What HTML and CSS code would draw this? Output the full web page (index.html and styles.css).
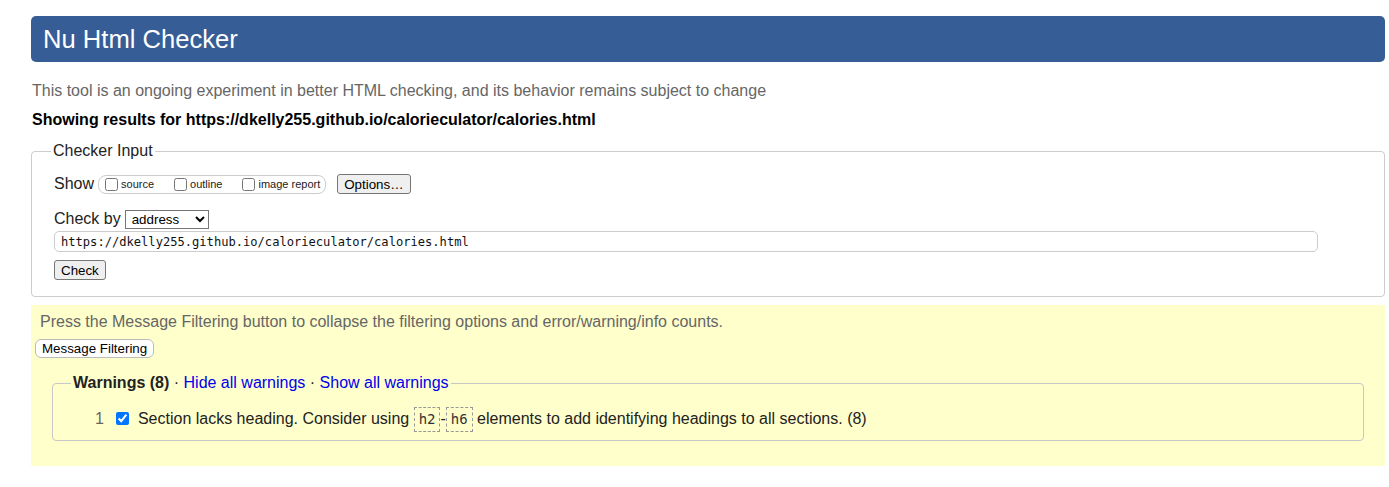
FILE: index.html
```html
<!DOCTYPE html>
<html lang="en">
<head>
<meta charset="utf-8">
<title>Nu Html Checker</title>
<link rel="stylesheet" href="styles.css">
</head>
<body>
<div class="page">
  <h1 class="title">Nu Html Checker</h1>
  <p class="about">This tool is an ongoing experiment in better HTML checking, and its behavior remains subject to change</p>
  <p class="results">Showing results for https://dkelly255.github.io/calorieculator/calories.html</p>
  <form class="input-form">
    <fieldset class="checker">
      <legend class="checker-legend">Checker Input</legend>
      <div class="show-row">
        <span class="row-label">Show</span>
        <span class="show-group">
          <label class="opt"><input class="opt-box" type="checkbox">source</label>
          <label class="opt"><input class="opt-box" type="checkbox">outline</label>
          <label class="opt opt-last"><input class="opt-box" type="checkbox">image report</label>
        </span>
        <button type="button" class="btn btn-options">Options…</button>
      </div>
      <div class="by-row">
        <span class="row-label">Check by</span>
        <select class="select"><option>address</option></select>
      </div>
      <input class="url" type="text" value="https://dkelly255.github.io/calorieculator/calories.html">
      <div class="check-row"><button type="button" class="btn">Check</button></div>
    </fieldset>
  </form>
  <div class="filters">
    <p class="filter-info">Press the Message Filtering button to collapse the filtering options and error/warning/info counts.</p>
    <button type="button" class="filter-btn">Message Filtering</button>
    <fieldset class="warnings">
      <legend class="warnings-legend"><strong>Warnings (8)</strong> · <a class="link" href="#">Hide all warnings</a> · <a class="link" href="#">Show all warnings</a></legend>
      <div class="warn-row">
        <span class="num">1</span>
        <input class="warn-box" type="checkbox" checked>
        <span class="msg">Section lacks heading. Consider using <code class="code">h2</code>-<code class="code">h6</code> elements to add identifying headings to all sections. (8)</span>
      </div>
    </fieldset>
  </div>
</div>
</body>
</html>
```

FILE: styles.css
```css
html, body {
  margin: 0;
  padding: 0;
  background: #fff;
}

body {
  font-family: "Liberation Sans", Arial, sans-serif;
  font-size: 16px;
  color: #111;
}

.page {
  margin-left: 31px;
  width: 1354px;
  padding-top: 16px;
}

.title {
  margin: 0;
  height: 46px;
  line-height: 46px;
  padding-left: 12px;
  background: #365d95;
  color: #fff;
  font-size: 25.6px;
  font-weight: normal;
  border-radius: 5px;
}

.about {
  margin: 20px 0 0 1px;
  line-height: 18px;
  color: #666;
}

.results {
  margin: 11px 0 0 1px;
  line-height: 18px;
  font-weight: bold;
  color: #000;
}

.input-form {
  margin: 13px 0 0 0;
}

.checker {
  margin: 0;
  padding: 14px 22px 16px 22px;
  border: 1px solid #ccc;
  border-radius: 4px;
}

.checker-legend {
  margin-left: -3px;
  padding: 0 2px;
  line-height: 18px;
  color: #222;
}

.show-row, .by-row {
  display: flex;
  align-items: center;
  height: 20px;
}

.row-label {
  line-height: 18px;
  color: #222;
}

.show-group {
  display: flex;
  align-items: center;
  height: 17px;
  margin-left: 4px;
  padding: 0 5px 0 2px;
  border: 1px solid #ccc;
  border-radius: 8px;
}

.opt {
  display: flex;
  align-items: center;
  font-size: 11px;
  color: #222;
  margin-right: 16px;
}

.opt-last {
  margin-right: 0;
}

.opt-box {
  width: 13px;
  height: 13px;
  margin: 0 3px 0 4px;
}

.btn {
  font-family: "Liberation Sans", Arial, sans-serif;
  font-size: 13.33px;
  color: #000;
  background: #efefef;
  border: 1px solid #767676;
  border-radius: 3px;
  padding: 1px 6px;
  height: 20px;
  line-height: 15px;
}

.btn-options {
  margin-left: 11px;
}

.by-row {
  margin-top: 15px;
}

.select {
  margin-left: 4px;
  width: 84px;
  height: 19px;
  font-family: "Liberation Sans", Arial, sans-serif;
  font-size: 13.33px;
  border: 1px solid #767676;
  border-radius: 0;
  background: #fff;
  padding: 0 0 0 2px;
}

.url {
  display: block;
  box-sizing: border-box;
  margin-top: 2px;
  width: 1264px;
  height: 21px;
  padding: 0 6px;
  border: 1px solid #ccc;
  border-radius: 5px;
  font-family: "DejaVu Sans Mono", monospace;
  font-size: 12.1px;
  color: #111;
}

.check-row {
  margin-top: 8px;
  display: flex;
}

.filters {
  margin-top: 8px;
  background: #ffffcc;
  padding: 8px 0 25px 0;
}

.filter-info {
  margin: 0 0 0 9px;
  line-height: 18px;
  color: #666;
}

.filter-btn {
  display: block;
  margin: 8px 0 0 4px;
  height: 19px;
  padding: 0 6px;
  font-family: "Liberation Sans", Arial, sans-serif;
  font-size: 13.33px;
  line-height: 15px;
  color: #000;
  background: #fff;
  border: 1px solid #bbb;
  border-radius: 6px;
}

.warnings {
  margin: 16px 21px 0 21px;
  padding: 14px 20px 9px 20px;
  border: 1px solid #c8c8c8;
  border-radius: 4px;
}

.warnings-legend {
  margin-left: -2px;
  padding: 0 2px;
  line-height: 18px;
  color: #222;
}

.warnings-legend strong {
  color: #222;
}

.link {
  color: #0000ee;
  text-decoration: none;
}

.warn-row {
  display: flex;
  align-items: center;
  height: 25px;
  color: #222;
}

.num {
  margin-left: 22px;
  color: #666;
}

.warn-box {
  width: 13px;
  height: 13px;
  margin: 0 9px 0 12px;
  accent-color: #0075ff;
}

.msg {
  line-height: 25px;
  white-space: nowrap;
}

.code {
  display: inline-block;
  font-family: "DejaVu Sans Mono", monospace;
  font-size: 14px;
  line-height: 17px;
  padding: 3px 4px;
  border: 1px dashed #999;
  color: #333;
}
```
